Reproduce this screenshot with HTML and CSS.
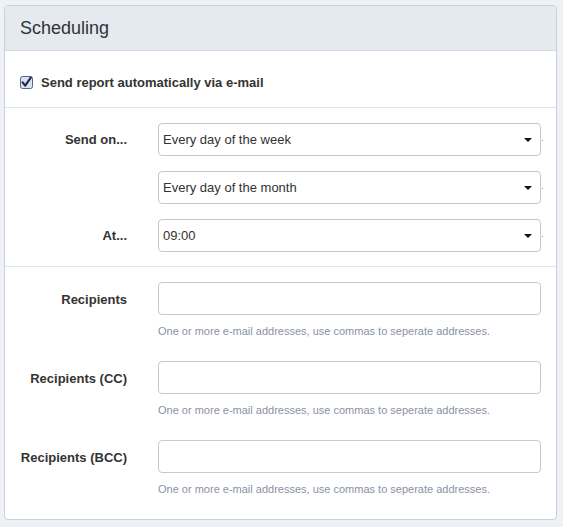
FILE: index.html
```html
<!DOCTYPE html>
<html>
<head>
<meta charset="utf-8">
<link rel="stylesheet" href="styles.css">
</head>
<body>
<div class="panel">
  <div class="panel-head"><h3 class="panel-title">Scheduling</h3></div>
  <div class="section check-section">
    <label class="check">
      <svg class="check-box" width="13" height="13" viewBox="0 0 13 13">
        <rect x="0.5" y="0.5" width="12" height="12" rx="2" fill="#d9e1f2" stroke="#55648a"/>
        <path d="M2.6 6.4 L5.2 9.6 L10.8 1.6" fill="none" stroke="#1d2744" stroke-width="2.1" stroke-linecap="round" stroke-linejoin="round"/>
      </svg>
      <span>Send report automatically via e-mail</span>
    </label>
  </div>
  <div class="section form-grid sched">
    <div class="lbl">Send on...</div>
    <div class="ctrl">
      <div class="sel"><select><option>Every day of the week</option></select><span class="caret"></span></div>
      <span class="dot"></span>
    </div>
    <div class="lbl"></div>
    <div class="ctrl">
      <div class="sel"><select><option>Every day of the month</option></select><span class="caret"></span></div>
      <span class="dot"></span>
    </div>
    <div class="lbl">At...</div>
    <div class="ctrl">
      <div class="sel"><select><option>09:00</option></select><span class="caret"></span></div>
      <span class="dot"></span>
    </div>
  </div>
  <div class="section form-grid recips">
    <div class="lbl">Recipients</div>
    <div class="field">
      <input class="txt" type="text">
      <div class="help">One or more e-mail addresses, use commas to seperate addresses.</div>
    </div>
    <div class="lbl">Recipients (CC)</div>
    <div class="field">
      <input class="txt" type="text">
      <div class="help">One or more e-mail addresses, use commas to seperate addresses.</div>
    </div>
    <div class="lbl">Recipients (BCC)</div>
    <div class="field">
      <input class="txt" type="text">
      <div class="help">One or more e-mail addresses, use commas to seperate addresses.</div>
    </div>
  </div>
</div>
</body>
</html>
```
FILE: styles.css
```css
* { box-sizing: border-box; }
html, body { margin: 0; padding: 0; }
body {
  background: #eef1f5;
  font-family: "Liberation Sans", Arial, sans-serif;
  color: #333;
  padding: 5px 7px 7px 4px;
}
.panel {
  width: 553px;
  background: #fff;
  border: 1px solid #c9d0db;
  border-radius: 4px;
  overflow: hidden;
}
.panel-head {
  height: 45px;
  background: #e5eaf1;
  border-bottom: 1px solid #d3d9e2;
  padding-left: 15px;
  display: flex;
  align-items: center;
}
.panel-title {
  margin: 0;
  font-size: 18px;
  font-weight: normal;
  color: #333;
  padding-top: 1px;
}
.section { border-bottom: 1px solid #e2e6ec; }
.section:last-child { border-bottom: none; }
.check-section {
  padding: 23px 15px 17px 15px;
}
.check {
  display: flex;
  align-items: center;
  height: 16px;
  font-size: 13px;
  font-weight: bold;
  color: #333;
}
.check-box { margin-right: 8px; margin-top: 0; }
.form-grid {
  display: grid;
  grid-template-columns: 122px 397px;
  column-gap: 31px;
}
.sched {
  padding: 15px 0 14px 0;
  row-gap: 15px;
}
.recips {
  padding: 15px 0 22px 0;
  row-gap: 22px;
}
.lbl {
  text-align: right;
  font-size: 13px;
  font-weight: bold;
  color: #333;
  line-height: 16px;
  padding-top: 9px;
}
.recips .lbl { padding-top: 10px; }
.ctrl {
  display: flex;
  align-items: center;
}
.sel {
  position: relative;
  width: 383px;
  height: 33px;
}
.sel select {
  appearance: none;
  -webkit-appearance: none;
  width: 100%;
  height: 100%;
  border: 1px solid #c6c6c6;
  border-radius: 4px;
  background: #fff;
  font-family: "Liberation Sans", Arial, sans-serif;
  font-size: 13px;
  color: #333;
  padding: 0 0 0 4px;
  margin: 0;
}
.caret {
  position: absolute;
  right: 9px;
  top: 15px;
  width: 0;
  height: 0;
  border-left: 4px solid transparent;
  border-right: 4px solid transparent;
  border-top: 4px solid #111;
}
.dot {
  width: 1px;
  height: 1px;
  background: #999;
  margin-left: 1px;
  margin-top: 2px;
}
.field { display: flex; flex-direction: column; }
.txt {
  width: 383px;
  height: 33px;
  border: 1px solid #c9c9c9;
  border-radius: 4px;
  margin: 0;
  padding: 0 6px;
  font-size: 13px;
  background: #fff;
}
.help {
  margin-top: 8px;
  font-size: 11px;
  line-height: 16px;
  color: #8a92a3;
}
```
